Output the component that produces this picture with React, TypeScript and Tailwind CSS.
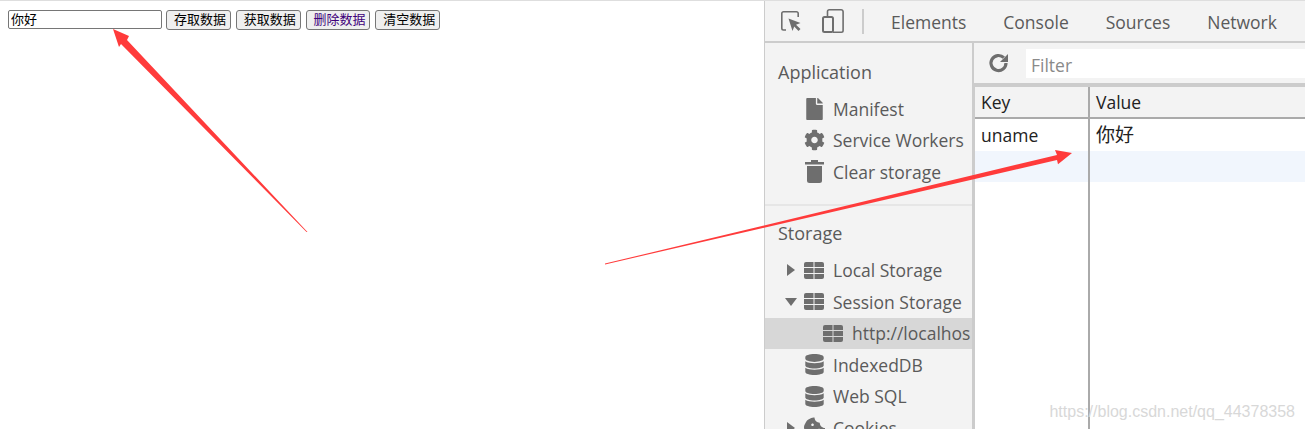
import { FaFile, FaCog, FaDatabase, FaCookieBite } from "react-icons/fa";
import type { ReactNode } from "react";

const CJK = "font-['Liberation_Sans','Noto_Sans_CJK_SC',sans-serif]";

function TableIcon() {
  return (
    <svg width="20" height="17" viewBox="0 0 20 17" fill="#6e6e6e" className="-ml-px">
      <path d="M0 2a2 2 0 0 1 2-2h7.500v5H0z" />
      <path d="M10.500 0H18a2 2 0 0 1 2 2v3h-9.500z" />
      <rect x="0" y="6" width="9.500" height="5" />
      <rect x="10.500" y="6" width="9.500" height="5" />
      <path d="M0 12h9.500v5H2a2 2 0 0 1-2-2z" />
      <path d="M10.500 12H20v3a2 2 0 0 1-2 2h-7.500z" />
    </svg>
  );
}

function TrashIcon() {
  return (
    <svg width="19" height="23" viewBox="0 0 19 23" fill="#6e6e6e">
      <path d="M6 0h7v2h6v2.500H0V2h6z" />
      <path d="M2 6h15v14.500a2.500 2.500 0 0 1-2.500 2.500h-10A2.500 2.500 0 0 1 2 20.500z" />
    </svg>
  );
}

function TreeRow(props: { icon: ReactNode; label: string; caret?: "right" | "down"; selected?: boolean; indent?: string }) {
  return (
    <div className={`flex h-[31.5px] items-center ${props.selected ? "bg-[#d7d7d7]" : ""} ${props.indent ?? "pl-[18px]"}`}>
      <span className="mr-[5px] flex w-[16px] shrink-0 justify-center">
        {props.caret === "right" && <span className="h-0 w-0 border-y-[6px] border-l-[8px] border-y-transparent border-l-[#6e6e6e]" />}
        {props.caret === "down" && <span className="h-0 w-0 border-x-[6px] border-t-[8px] border-x-transparent border-t-[#6e6e6e]" />}
      </span>
      <span className="flex w-[21px] shrink-0 justify-center">{props.icon}</span>
      <span className="ml-2 whitespace-nowrap">{props.label}</span>
    </div>
  );
}

export default function App() {
  return (
    <div className="relative flex h-[429px] w-[1305px] overflow-hidden border-t border-[#dedede] bg-white">
      {/* page under test */}
      <div className={`flex h-fit w-[764px] shrink-0 items-start pl-2 pt-[9px] text-[13px] text-black ${CJK}`}>
        <input
          defaultValue="你好"
          className={`h-[19px] w-[154px] rounded-[2px] border border-[#767676] px-[2px] text-[13px] ${CJK}`}
        />
        <div className="ml-1 flex gap-[5px]">
          {["存取数据", "获取数据", "删除数据", "清空数据"].map((t) => (
            <button
              key={t}
              className={`h-[20px] w-[64.8px] rounded-[3px] border border-[#767676] bg-[#efefef] pl-[3px] text-center leading-[18px] ${t === "删除数据" ? "text-[#40007a]" : ""}`}
            >
              {t}
            </button>
          ))}
        </div>
      </div>

      {/* devtools */}
      <div className="flex min-w-0 flex-1 flex-col border-l border-[#ccc] bg-[#f3f3f3] font-['Open_Sans',sans-serif] text-[#5a5a5a]">
        <div className="flex h-[42px] shrink-0 items-center border-b-2 border-[#ccc] pl-[16px] text-[17.5px]">
          <svg width="20" height="20" viewBox="0 0 20 20" fill="none" stroke="#6e6e6e" strokeWidth="1.6">
            <path d="M5 19H2.500A1.700 1.700 0 0 1 .8 17.300V2.500A1.700 1.700 0 0 1 2.500.8h13a1.700 1.700 0 0 1 1.700 1.700V6" />
            <path d="M7.500 7.500l12 4.500-4.500 1.800 4.500 4.200-2 2-4.300-4.500-1.700 4.500z" fill="#6e6e6e" stroke="none" />
          </svg>
          <svg className="ml-[21px]" width="22" height="24" viewBox="0 0 22 24" fill="none" stroke="#6e6e6e" strokeWidth="1.6">
            <path d="M5.500 7V2.500A1.700 1.700 0 0 1 7.200.8h11.900a2 2 0 0 1 2 2v18.700a1.700 1.700 0 0 1-1.700 1.700H11" />
            <rect x="1" y="8" width="10" height="15" rx="1.500" strokeWidth="2" />
          </svg>
          <span className="ml-[18px] h-[25px] w-[2px] bg-[#ccc]" />
          <span className="ml-[27px] pt-[2px]">Elements</span>
          <span className="ml-[37px] pt-[2px]">Console</span>
          <span className="ml-[37px] pt-[2px]">Sources</span>
          <span className="ml-[37px] pt-[2px]">Network</span>
        </div>

        <div className="flex min-h-0 flex-1">
          <aside className="w-[209px] shrink-0 overflow-hidden border-r-2 border-[#ccc] text-[17.5px]">
            <div className="flex h-[50px] items-center pl-[13px] pt-[8px] text-[18px]">Application</div>
            <TreeRow label="Manifest" icon={<FaFile size={22} color="#6e6e6e" />} />
            <TreeRow label="Service Workers" icon={<FaCog size={22} color="#6e6e6e" />} />
            <TreeRow label="Clear storage" icon={<TrashIcon />} />
            <div className="mt-[16px] h-[2px] bg-[#e6e6e6]" />
            <div className="flex h-[49px] items-center pl-[13px] pt-[6px] text-[18px]">Storage</div>
            <TreeRow label="Local Storage" caret="right" icon={<TableIcon />} />
            <TreeRow label="Session Storage" caret="down" icon={<TableIcon />} />
            <TreeRow label="http://localhos" selected indent="pl-[37px]" icon={<TableIcon />} />
            <TreeRow label="IndexedDB" icon={<FaDatabase size={21} color="#6e6e6e" />} />
            <TreeRow label="Web SQL" icon={<FaDatabase size={21} color="#6e6e6e" />} />
            <TreeRow label="Cookies" caret="right" icon={<FaCookieBite size={22} color="#6e6e6e" />} />
          </aside>

          <div className="flex min-w-0 flex-1 flex-col">
            <div className="flex h-[40px] shrink-0 items-center pl-[13px]">
              <svg width="24" height="24" viewBox="0 0 24 24" fill="none" stroke="#6e6e6e" strokeWidth="3.2">
                <path d="M19 12a7.500 7.500 0 1 1-2.200-5.300" />
                <path d="M21 3v8h-8z" fill="#6e6e6e" stroke="none" />
              </svg>
              <div className="ml-[15px] flex h-[29px] flex-1 items-center bg-white pl-[5px] pt-[5px] text-[17.5px] text-[#8a8a8a]">Filter</div>
            </div>
            <div className="flex min-h-0 flex-1 flex-col border-l border-t-[4px] border-[#ccc] bg-white text-[17.5px] text-[#222]">
              <div className="flex h-[32px] shrink-0 border-b-[2px] border-[#aaa] bg-[#f3f3f3]">
                <div className="w-[115px] border-r-[2px] border-[#aaa] pl-[6px] leading-[30px]">Key</div>
                <div className="pl-[6px] leading-[30px]">Value</div>
              </div>
              <div className="flex min-h-0 flex-1">
                <div className="w-[115px] shrink-0 border-r-[2px] border-[#aaa]">
                  <div className="h-[32px] pl-[6px] leading-[32px]">uname</div>
                  <div className="h-[31px] bg-[#f1f6fd]" />
                </div>
                <div className="flex-1">
                  <div className={`h-[32px] pl-[6px] pt-[1px] text-[19px] leading-[32px] ${CJK}`}>你好</div>
                  <div className="h-[31px] bg-[#f1f6fd]" />
                </div>
              </div>
            </div>
          </div>
        </div>
      </div>

      {/* annotation arrows drawn over the screenshot */}
      <svg className="pointer-events-none absolute -top-px left-0" width="1305" height="429" viewBox="0 0 1305 429">
        <polygon points="113,29 129,36 127,40 307.5,232 306.5,232 121,44 119,47" fill="#ff3b3b" />
        <polygon points="605,263.6 1057,155 1055,150 1072,153 1058,164.300 1057,160 605,264.4" fill="#ff3b3b" />
      </svg>

      {/* blog watermark */}
      <span className="absolute bottom-[5px] right-[10px] font-['Liberation_Sans',sans-serif] text-[16px] text-[#d8d8d8]">
        https://blog.csdn.net/qq_44378358
      </span>
    </div>
  );
}
